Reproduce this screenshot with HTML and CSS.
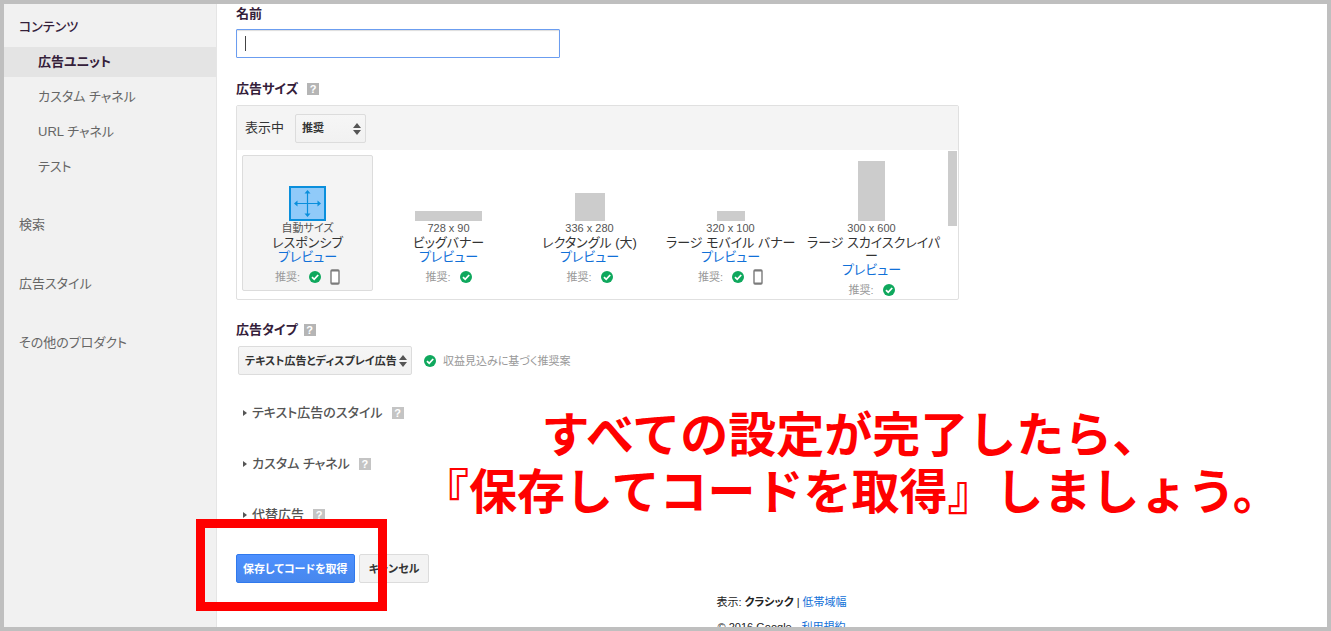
FILE: index.html
```html
<!DOCTYPE html>
<html lang="ja">
<head>
<meta charset="utf-8">
<title>広告ユニット</title>
<link rel="stylesheet" href="styles.css">
</head>
<body>
<svg class="defs" aria-hidden="true">
  <symbol id="check" viewBox="0 0 12 12"><circle cx="6" cy="6" r="6" fill="#0fa85d"/><path d="M3 6.2 5.2 8.3 9.2 4" fill="none" stroke="#fff" stroke-width="1.8"/></symbol>
  <symbol id="phone" viewBox="0 0 10 16"><rect x="1" y="1" width="8" height="14" rx="1" fill="#fff" stroke="#7b7b7b" stroke-width="1.4"/><path d="M1 1.8h8M1 14.2h8" stroke="#7b7b7b" stroke-width="1.6"/></symbol>
  <symbol id="updown" viewBox="0 0 8 12"><path d="M0 5 4 0 8 5zM0 7h8L4 12z" fill="#555"/></symbol>
</svg>
<div class="frame">
  <nav class="sidebar">
    <h2 class="nav-title">コンテンツ</h2>
    <ul class="subnav">
      <li><a class="nav-link active" href="#">広告ユニット</a></li>
      <li><a class="nav-link" href="#">カスタム チャネル</a></li>
      <li><a class="nav-link" href="#">URL チャネル</a></li>
      <li><a class="nav-link" href="#">テスト</a></li>
    </ul>
    <ul class="topnav">
      <li><a class="nav-link" href="#">検索</a></li>
      <li><a class="nav-link" href="#">広告スタイル</a></li>
      <li><a class="nav-link" href="#">その他のプロダクト</a></li>
    </ul>
  </nav>
  <main class="main">
    <label class="heading" for="name">名前</label>
    <div class="name-field"><input id="name" class="name-input" type="text"><span class="caret"></span></div>

    <div class="heading size-heading">広告サイズ <button class="help" type="button">?</button></div>
    <section class="panel">
      <div class="panel-head">
        <label for="filter">表示中</label>
        <span class="select-wrap filter"><select id="filter" class="select"><option>推奨</option></select><svg class="arrows"><use href="#updown"/></svg></span>
      </div>
      <div class="sizes">
        <article class="size selected">
          <div class="thumb"><svg class="responsive" viewBox="0 0 37 35"><rect x="1" y="1" width="35" height="33" fill="#90caf9" stroke="#0a8fdc" stroke-width="2"/><path d="M18.500 6v23M7 17.500h23" stroke="#0a8fdc" stroke-width="1.200"/><path d="M18.500 4l3 3.500h-6zM18.500 31l3-3.500h-6zM5 17.500l3.500-3v6zM32 17.500l-3.500-3v6z" fill="#0a8fdc"/></svg></div>
          <div class="dims">自動サイズ</div>
          <div class="size-name">レスポンシブ</div>
          <a class="preview" href="#">プレビュー</a>
          <div class="rec">推奨: <svg class="check"><use href="#check"/></svg><svg class="phone"><use href="#phone"/></svg></div>
        </article>
        <article class="size">
          <div class="thumb"><span class="block banner"></span></div>
          <div class="dims">728 x 90</div>
          <div class="size-name">ビッグバナー</div>
          <a class="preview" href="#">プレビュー</a>
          <div class="rec">推奨: <svg class="check"><use href="#check"/></svg></div>
        </article>
        <article class="size">
          <div class="thumb"><span class="block rectangle"></span></div>
          <div class="dims">336 x 280</div>
          <div class="size-name">レクタングル (大)</div>
          <a class="preview" href="#">プレビュー</a>
          <div class="rec">推奨: <svg class="check"><use href="#check"/></svg></div>
        </article>
        <article class="size">
          <div class="thumb"><span class="block mobile"></span></div>
          <div class="dims">320 x 100</div>
          <div class="size-name">ラージ モバイル バナー</div>
          <a class="preview" href="#">プレビュー</a>
          <div class="rec">推奨: <svg class="check"><use href="#check"/></svg><svg class="phone"><use href="#phone"/></svg></div>
        </article>
        <article class="size">
          <div class="thumb"><span class="block skyscraper"></span></div>
          <div class="dims">300 x 600</div>
          <div class="size-name">ラージ スカイスクレイパ<br>ー</div>
          <a class="preview" href="#">プレビュー</a>
          <div class="rec">推奨: <svg class="check"><use href="#check"/></svg></div>
        </article>
        <span class="scrollbar"></span>
      </div>
    </section>

    <div class="heading type-heading"><label for="type">広告タイプ</label> <button class="help" type="button">?</button></div>
    <div class="type-row">
      <span class="select-wrap type"><select id="type" class="select"><option>テキスト広告とディスプレイ広告</option></select><svg class="arrows"><use href="#updown"/></svg></span>
      <svg class="check"><use href="#check"/></svg>
      <span class="note">収益見込みに基づく推奨案</span>
    </div>

    <div class="accordions">
      <div class="accordion"><button class="toggle" type="button">テキスト広告のスタイル</button><button class="help pale" type="button">?</button></div>
      <div class="accordion"><button class="toggle" type="button">カスタム チャネル</button><button class="help pale" type="button">?</button></div>
      <div class="accordion"><button class="toggle" type="button">代替広告</button><button class="help pale" type="button">?</button></div>
    </div>

    <div class="actions">
      <button class="button primary" type="button">保存してコードを取得</button>
      <button class="button" type="button">キャンセル</button>
      <span class="highlight"></span>
    </div>

    <footer class="footer">
      <div>表示: <b>クラシック</b> | <a href="#">低帯域幅</a></div>
      <div>© 2016 Google - <a href="#">利用規約</a></div>
    </footer>
    <p class="callout">すべての設定が完了したら、<br>『保存してコードを取得』しましょう。</p>
  </main>
</div>
</body>
</html>
```
FILE: styles.css
```css
* { box-sizing: border-box; }
body {
  margin: 0;
  background: #fff;
  color: #333;
  font: 13px/20px "Liberation Sans", "Noto Sans CJK JP", sans-serif;
  font-feature-settings: "palt";
}
button, select, input { font: inherit; font-feature-settings: inherit; }
a { color: #1170d8; text-decoration: none; }
ul { list-style: none; margin: 0; padding: 0; }
.defs { display: none; }
.frame {
  display: grid;
  grid-template-columns: 213px 1fr;
  height: 100vh;
  border: 4px solid #bfbfbf;
  overflow: hidden;
}
.sidebar {
  background: #f1f1f1;
  border-right: 1px solid #e5e5e5;
  padding-top: 8px;
}
.nav-title {
  margin: 0 0 5px;
  padding-left: 15px;
  color: #34203a;
  font-size: 13px;
  font-weight: 500;
  line-height: 30px;
}
.nav-link {
  display: block;
  color: #666;
  line-height: 30px;
}
.subnav { display: grid; gap: 5px; }
.subnav .nav-link { padding-left: 34px; }
.subnav .active { background: #e4e4e4; color: #34203a; font-weight: bold; }
.topnav { display: grid; gap: 29px; margin-top: 28px; }
.topnav .nav-link { padding-left: 15px; }

.main { position: relative; padding-left: 19px; min-width: 0; }
.heading {
  display: flex;
  align-items: center;
  gap: 9px;
  height: 20px;
  color: #34203a;
  font-weight: bold;
}
.help {
  width: 12px;
  height: 12px;
  padding: 0;
  border: 0;
  background: #b5b5b5;
  color: #fff;
  font-size: 11px;
  font-weight: bold;
  line-height: 12px;
}
.help.pale { background: #c4c4c4; }
.name-field { position: relative; width: 324px; margin-top: 5px; }
.name-input {
  display: block;
  width: 100%;
  height: 29px;
  border: 1px solid #6b9df0;
  border-radius: 1px;
  padding: 0 8px;
  box-shadow: inset 0 1px 1px #ddd;
  outline: none;
}
.caret {
  position: absolute;
  left: 9px;
  top: 7px;
  width: 1px;
  height: 15px;
  background: #444;
}
.size-heading { margin-top: 21px; }
.panel {
  width: 723px;
  margin-top: 6px;
  border: 1px solid #e0e0e0;
  border-radius: 2px;
}
.panel-head {
  display: flex;
  align-items: center;
  gap: 11px;
  height: 44px;
  padding-left: 8px;
  background: #f4f4f4;
}
.select-wrap { position: relative; display: block; }
.filter { width: 71px; }
.type { width: 174px; }
.select {
  display: block;
  appearance: none;
  width: 100%;
  height: 29px;
  padding: 0 6px;
  border: 1px solid #dcdcdc;
  border-radius: 2px;
  background: linear-gradient(#f6f6f6, #f1f1f1);
  color: #333;
  font-size: 11px;
  font-weight: bold;
}
.arrows {
  position: absolute;
  right: 5px;
  top: 9px;
  width: 8px;
  height: 12px;
  pointer-events: none;
}
.sizes {
  position: relative;
  display: grid;
  grid-template-columns: repeat(5, minmax(0, 1fr));
  column-gap: 10px;
  padding: 5px 21px 8px 5px;
}
.size {
  height: 136px;
  border: 1px solid transparent;
  border-radius: 2px;
  text-align: center;
  white-space: nowrap;
}
.selected { background: #f4f4f4; border-color: #dcdcdc; }
.thumb {
  display: flex;
  align-items: flex-end;
  justify-content: center;
  height: 65px;
}
.responsive { width: 37px; height: 35px; }
.block { background: #ccc; }
.banner { width: 67px; height: 10px; }
.rectangle { width: 30px; height: 28px; }
.mobile { width: 28px; height: 10px; }
.skyscraper { width: 27px; height: 60px; }
.dims {
  color: #555;
  font-size: 11px;
  line-height: 15px;
}
.size-name { line-height: 13px; }
.preview { display: block; line-height: 16px; }
.rec {
  display: flex;
  align-items: center;
  justify-content: center;
  gap: 9px;
  height: 24px;
  color: #999;
  font-size: 11px;
}
.check { width: 12px; height: 12px; }
.phone { width: 10px; height: 16px; }
.scrollbar {
  position: absolute;
  top: 1px;
  right: 1px;
  width: 9px;
  height: 75px;
  background: #ccc;
}
.type-heading { margin-top: 20px; }
.type-heading .help { margin-left: -3px; }
.type-row {
  display: flex;
  align-items: center;
  margin-top: 6px;
  padding-left: 2px;
}
.type-row .check { margin-left: 12px; }
.note { margin-left: 7px; color: #999; font-size: 11px; }
.accordions { display: grid; gap: 31px; margin-top: 28px; }
.accordion { display: flex; align-items: center; gap: 9px; padding-left: 7px; }
.toggle {
  display: flex;
  align-items: center;
  gap: 5px;
  height: 20px;
  padding: 0;
  border: 0;
  background: none;
  color: #555;
  font-weight: 500;
}
.toggle::before {
  content: "";
  border: 3px solid transparent;
  border-left: 4px solid #555;
  border-right: 0;
}
.actions { position: relative; display: flex; gap: 4px; margin-top: 29px; }
.button {
  height: 29px;
  padding: 0 9px;
  border: 1px solid #dcdcdc;
  border-radius: 2px;
  background: #f3f3f3;
  color: #333;
  font-size: 11px;
  font-weight: bold;
}
.primary {
  padding: 0 6px;
  border-color: #3079ed;
  background: linear-gradient(#4d90fe, #4787ed);
  color: #fff;
}
.highlight {
  position: absolute;
  left: -40px;
  top: -35px;
  width: 191px;
  height: 92px;
  border: 9px solid #f00;
}
.footer {
  margin-top: 7px;
  font-size: 11px;
  line-height: 25px;
  text-align: center;
  color: #222;
}
.callout {
  position: absolute;
  top: 399px;
  left: 204px;
  margin: 0;
  color: #f00;
  font: bold 48px/57px "Noto Sans CJK JP", sans-serif;
  font-feature-settings: normal;
  text-align: center;
  white-space: nowrap;
}
```
